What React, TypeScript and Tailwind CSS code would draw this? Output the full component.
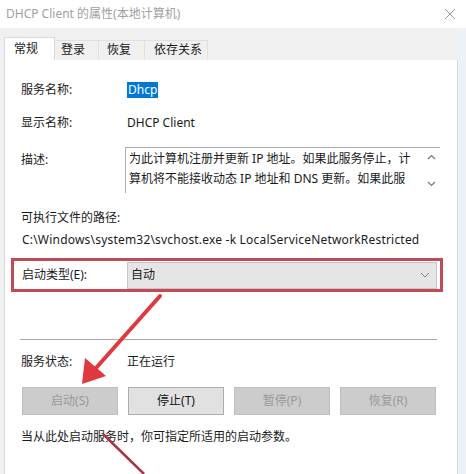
import React from "react";

const font = { fontFamily: '"Noto Sans", "Noto Sans CJK SC", sans-serif' };

function Btn({ label, disabled }: { label: string; disabled?: boolean }) {
  return (
    <div
      className={
        disabled
          ? "w-[96px] h-[28px] flex items-center justify-center border border-[#bfbfbf] bg-[#cccccc] text-[#9a9a9a] text-[12px]"
          : "w-[96px] h-[28px] flex items-center justify-center border border-[#adadad] bg-[#e1e1e1] text-[#111] text-[12px]"
      }
    >
      {label}
    </div>
  );
}

export default function App() {
  return (
    <div className="relative w-[466px] h-[474px] overflow-hidden bg-[#eef1f5] text-[#1a1a1a]" style={font}>
      {/* title bar */}
      <div className="h-[28px] bg-white flex items-center pl-[6px] pr-[8px] text-[12px] text-[#a0a0a0]">
        <span className="flex-1">DHCP Client 的属性(本地计算机)</span>
        <svg width="12" height="12" viewBox="0 0 12 12" className="mr-[2px]">
          <path d="M1 1 L11 11 M11 1 L1 11" stroke="#9a9a9a" strokeWidth="1" />
        </svg>
      </div>
      {/* tabs strip */}
      <div className="h-[32px] bg-[#f0f0f0] flex items-end pl-[4px] w-[458px]">
        <div className="h-[23px] w-[51px] bg-white border-l border-t border-r border-[#d9d9d9] flex items-center pl-[9px] text-[12px]">
          常规
        </div>
        <div className="h-[19px] mb-[1px] w-[44px] bg-[#f0f0f0] border-t border-r border-[#e0e0e0] flex items-center pl-[6px] text-[12px]">
          登录
        </div>
        <div className="h-[19px] mb-[1px] w-[46px] bg-[#f0f0f0] border-t border-r border-[#e0e0e0] flex items-center pl-[8px] text-[12px]">
          恢复
        </div>
        <div className="h-[19px] mb-[1px] w-[63px] bg-[#f0f0f0] border-t border-r border-[#e0e0e0] flex items-center pl-[9px] text-[12px]">
          依存关系
        </div>
      </div>
      {/* panel */}
      <div className="flex">
        <div className="w-[4px] bg-[#f0f0f0]" />
        <div className="w-[454px] h-[414px] bg-white border-l border-r border-[#d9d9d9] flex flex-col text-[12px]">
          <div className="pl-[16px] pt-[20px] flex flex-col">
            <div className="h-[20px] flex items-center">
              <span className="w-[106px]">服务名称:</span>
              <span className="bg-[#0078d7] text-white px-[1px] leading-[16px]">Dhcp</span>
            </div>
            <div className="h-[20px] mt-[13px] flex items-center">
              <span className="w-[106px]">显示名称:</span>
              <span>DHCP Client</span>
            </div>
            <div className="h-[46px] mt-[14px] flex">
              <span className="w-[104px] mt-[5px] leading-[16px]">描述:</span>
              <div className="w-[315px] h-[46px] border-t border-l border-[#abadb3] flex">
                <div className="flex-1 pl-[3px] pt-[1px] leading-[20px] whitespace-nowrap overflow-hidden">
                  <div>为此计算机注册并更新 IP 地址。如果此服务停止，计</div>
                  <div>算机将不能接收动态 IP 地址和 DNS 更新。如果此服</div>
                </div>
                <div className="w-[17px] flex flex-col items-center justify-between pt-[6px] pb-[6px]">
                  <svg width="9" height="6" viewBox="0 0 9 6">
                    <path d="M1 5 L4.5 1.5 L8 5" stroke="#777" strokeWidth="1.2" fill="none" />
                  </svg>
                  <svg width="9" height="6" viewBox="0 0 9 6">
                    <path d="M1 1 L4.5 4.5 L8 1" stroke="#777" strokeWidth="1.2" fill="none" />
                  </svg>
                </div>
              </div>
            </div>
            <div className="h-[20px] mt-[15px] flex items-center">可执行文件的路径:</div>
            <div className="h-[20px] mt-[2px] flex items-center pl-[1px] whitespace-nowrap tracking-[0.2px]">
              C:\Windows\system32\svchost.exe -k LocalServiceNetworkRestricted
            </div>
          </div>
          {/* red box */}
          <div className="ml-[6px] mt-[8px] w-[432px] h-[34px] border-[3px] border-[#c24a55] flex items-center">
            <span className="w-[113px] pl-[8px]">启动类型(E):</span>
            <div className="w-[310px] h-[27px] bg-[#e5e5e5] border border-[#c6c6c6] flex items-center pl-[3px] pr-[6px]">
              <span className="flex-1">自动</span>
              <svg width="10" height="6" viewBox="0 0 10 6">
                <path d="M1 1 L5 5 L9 1" stroke="#888" strokeWidth="1" fill="none" />
              </svg>
            </div>
          </div>
          <div className="ml-[15px] mt-[47px] w-[417px] h-[1px] bg-[#a8a8a8]" />
          <div className="pl-[16px] flex flex-col">
            <div className="h-[20px] mt-[12px] flex items-center">
              <span className="w-[106px]">服务状态:</span>
              <span>正在运行</span>
            </div>
            <div className="mt-[15px] flex gap-[10px] pl-[1px]">
              <Btn label="启动(S)" disabled />
              <Btn label="停止(T)" />
              <Btn label="暂停(P)" disabled />
              <Btn label="恢复(R)" disabled />
            </div>
            <div className="h-[20px] mt-[12px] flex items-center">当从此处启动服务时，你可指定所适用的启动参数。</div>
          </div>
        </div>
      </div>
      {/* annotation arrows */}
      <svg className="absolute left-0 top-0" width="466" height="474" viewBox="0 0 466 474">
        <line x1="160" y1="296" x2="96" y2="368" stroke="#e0383f" strokeWidth="4" strokeLinecap="round" />
        <polygon points="82,384 85,358 106,376" fill="#e0383f" />
        <line x1="103" y1="434" x2="144" y2="474" stroke="#a8344a" strokeWidth="2.5" />
      </svg>
    </div>
  );
}
